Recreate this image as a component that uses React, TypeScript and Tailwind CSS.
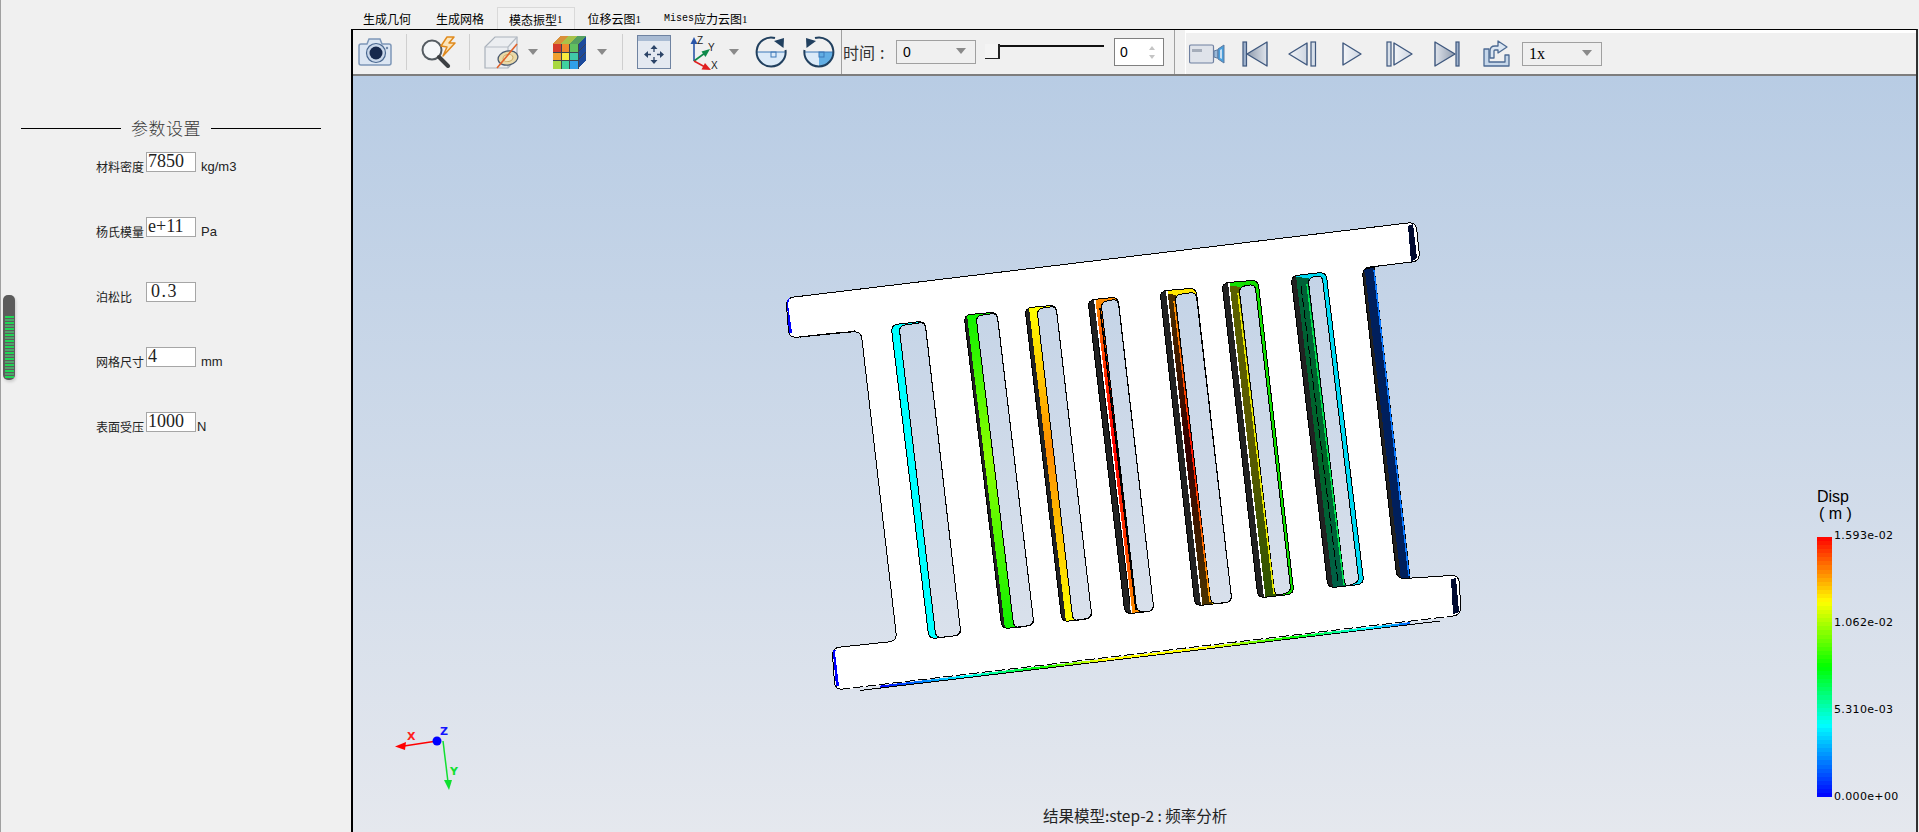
type P = [number, number];

const cjk = '"Noto Sans CJK SC", "Liberation Sans", sans-serif';

// rounded closed polygon for the model outlines
const rp = (pts: P[], r = 7) => {
  const n = pts.length;
  let d = '';
  pts.forEach((v, i) => {
    const a = pts[(i + n - 1) % n];
    const b = pts[(i + 1) % n];
    const la = Math.hypot(a[0] - v[0], a[1] - v[1]);
    const lb = Math.hypot(b[0] - v[0], b[1] - v[1]);
    const ra = Math.min(r, la / 2);
    const rb = Math.min(r, lb / 2);
    const p1 = [v[0] + ((a[0] - v[0]) / la) * ra, v[1] + ((a[1] - v[1]) / la) * ra];
    const p2 = [v[0] + ((b[0] - v[0]) / lb) * rb, v[1] + ((b[1] - v[1]) / lb) * rb];
    d += `${i === 0 ? 'M' : 'L'}${p1[0]} ${p1[1]} Q${v[0]} ${v[1]} ${p2[0]} ${p2[1]} `;
  });
  return d + 'Z';
};

const poly = (pts: P[]) => pts.map((p) => p.join(',')).join(' ');

type Slot = {
  o: P[];
  i: P[];
  band: number;
  gap?: boolean;
  wall: string;
  rim: string;
  edge?: string;
};

const slots: Slot[] = [
  { o: [[891, 325], [925, 321], [961, 635], [929, 639]], i: [[899, 326], [925, 322], [961, 635], [936, 638]], band: 0, wall: '#00ffff', rim: '#00ffff' },
  { o: [[964, 315], [997, 312], [1034, 625], [1002, 629]], i: [[976, 316], [997, 313], [1034, 625], [1014, 628]], band: 3, wall: 'url(#s2)', rim: 'url(#s2)' },
  { o: [[1025, 308], [1056, 305], [1092, 618], [1062, 622]], i: [[1037, 309], [1056, 306], [1092, 618], [1073, 621]], band: 4, wall: 'url(#s3)', rim: 'url(#s3)' },
  { o: [[1088, 300], [1118, 297], [1154, 611], [1125, 614]], i: [[1101, 302], [1118, 299], [1154, 611], [1137, 612]], band: 6, gap: true, wall: 'url(#s4)', rim: '#ff8c00', edge: '#000000' },
  { o: [[1160, 291], [1196, 288], [1232, 602], [1195, 606]], i: [[1175, 295], [1196, 292], [1232, 602], [1211, 604]], band: 6, gap: true, wall: 'url(#s5)', rim: '#ffe600', edge: 'url(#s5e)' },
  { o: [[1222, 283], [1258, 280], [1294, 594], [1258, 598]], i: [[1239, 287], [1255, 284], [1291, 592], [1275, 596]], band: 6, gap: true, wall: 'url(#s6)', rim: '#12e000', edge: '#e8e800' },
  { o: [[1291, 276], [1326, 272], [1364, 584], [1328, 588]], i: [[1308, 278], [1322, 275], [1359, 582], [1345, 587]], band: 5, wall: 'url(#s7)', rim: '#00d8f0', edge: '#00e050' },
];

const plate: P[] = [
  [786, 298], [1416, 222], [1420, 261], [1362, 268], [1397, 579], [1459, 575],
  [1461, 615], [835, 690], [832, 648], [897, 641], [861, 331], [789, 338],
];

const Slots = () => (
  <>
    {slots.map((s, n) => {
      const [a, , , d] = s.o;
      const off = s.band + (s.gap ? 1.5 : 0);
      return (
        <g key={n}>
          <clipPath id={`slot${n}`}>
            <path d={rp(s.o)} />
          </clipPath>
          <path d={rp(s.o)} fill={s.rim} />
          <g clipPath={`url(#slot${n})`}>
            <polygon points={poly([[a[0] - 9, a[1]], [s.i[0][0] + 1, s.i[0][1]], [s.i[3][0] + 1, s.i[3][1]], [d[0] - 9, d[1]]])} fill={s.wall} />
            {s.gap && <polygon points={poly([[a[0] - 9, a[1]], [a[0] + off, a[1]], [d[0] + off, d[1]], [d[0] - 9, d[1]]])} fill="#ffffff" />}
            {s.band > 0 && <polygon points={poly([[a[0] - 9, a[1]], [a[0] + s.band, a[1]], [d[0] + s.band, d[1]], [d[0] - 9, d[1]]])} fill="#222222" />}
            {n === 3 && <line x1={a[0] + 10} y1={a[1] + 40} x2={d[0] + 5} y2={d[1] - 10} stroke="#000000" strokeWidth="1" />}
            {n === 6 && <line x1={a[0] + 10} y1={a[1] + 10} x2={d[0] + 10} y2={d[1] - 6} stroke="#000000" strokeWidth="1" strokeDasharray="9 3" />}
          </g>
          <path d={rp(s.i, 6)} fill="url(#bgFill)" stroke="#000000" />
          {s.edge && <line x1={s.i[0][0] - 1} y1={s.i[0][1] + 6} x2={s.i[3][0] - 1} y2={s.i[3][1] - 2} stroke={s.edge} strokeWidth="1.5" />}
          <path d={rp(s.o)} fill="none" stroke="#000000" />
        </g>
      );
    })}
  </>
);

const Model = () => (
  <svg
    className="absolute inset-0"
    width="1563"
    height="756"
    viewBox="353 76 1563 756"
    shapeRendering="crispEdges"
  >
    <defs>
      <linearGradient id="bgFill" gradientUnits="userSpaceOnUse" x1="0" y1="76" x2="0" y2="832">
        <stop offset="0" stopColor="#b8cce4" />
        <stop offset="1" stopColor="#e5e8ee" />
      </linearGradient>
      <linearGradient id="s2" gradientUnits="userSpaceOnUse" x1="0" y1="315" x2="0" y2="629">
        <stop offset="0" stopColor="#10f000" />
        <stop offset="0.45" stopColor="#8cff00" />
        <stop offset="1" stopColor="#10f000" />
      </linearGradient>
      <linearGradient id="s3" gradientUnits="userSpaceOnUse" x1="0" y1="308" x2="0" y2="622">
        <stop offset="0" stopColor="#ffff00" />
        <stop offset="0.45" stopColor="#ff8c00" />
        <stop offset="1" stopColor="#ffff00" />
      </linearGradient>
      <linearGradient id="s4" gradientUnits="userSpaceOnUse" x1="0" y1="300" x2="0" y2="614">
        <stop offset="0" stopColor="#ff8c00" />
        <stop offset="0.2" stopColor="#ff3300" />
        <stop offset="0.45" stopColor="#ff0000" />
        <stop offset="0.75" stopColor="#ff3300" />
        <stop offset="1" stopColor="#ff9000" />
      </linearGradient>
      <linearGradient id="s5" gradientUnits="userSpaceOnUse" x1="0" y1="291" x2="0" y2="606">
        <stop offset="0" stopColor="#4a3000" />
        <stop offset="0.5" stopColor="#380000" />
        <stop offset="1" stopColor="#4a3400" />
      </linearGradient>
      <linearGradient id="s5e" gradientUnits="userSpaceOnUse" x1="0" y1="291" x2="0" y2="606">
        <stop offset="0" stopColor="#ffa000" />
        <stop offset="0.5" stopColor="#ff1000" />
        <stop offset="1" stopColor="#ffa800" />
      </linearGradient>
      <linearGradient id="s6" gradientUnits="userSpaceOnUse" x1="0" y1="283" x2="0" y2="598">
        <stop offset="0" stopColor="#5a6000" />
        <stop offset="0.5" stopColor="#5c5a00" />
        <stop offset="1" stopColor="#2e5500" />
      </linearGradient>
      <linearGradient id="s7" gradientUnits="userSpaceOnUse" x1="0" y1="276" x2="0" y2="588">
        <stop offset="0" stopColor="#006038" />
        <stop offset="0.6" stopColor="#006428" />
        <stop offset="1" stopColor="#006048" />
      </linearGradient>
      <linearGradient id="rimBottom" gradientUnits="userSpaceOnUse" x1="880" y1="0" x2="1410" y2="0">
        <stop offset="0" stopColor="#0000ff" />
        <stop offset="0.16" stopColor="#00ffff" />
        <stop offset="0.3" stopColor="#00ff00" />
        <stop offset="0.42" stopColor="#ffff00" />
        <stop offset="0.62" stopColor="#ffff00" />
        <stop offset="0.78" stopColor="#00ff00" />
        <stop offset="0.92" stopColor="#00ffff" />
        <stop offset="1" stopColor="#0060ff" />
      </linearGradient>
    </defs>

    {/* side wall under the bottom edge */}
    <line x1="860" y1="690.5" x2="1440" y2="621" stroke="#000000" />
    <line x1="880" y1="686.6" x2="1410" y2="623.2" stroke="url(#rimBottom)" strokeWidth="2" />

    {/* right side wall */}
    <polygon points="1362,270 1374,267 1410,577 1408,581 1400,583 1396,575" fill="#001f5c" stroke="#000000" />
    <polygon points="1361,272 1365,272 1401,580 1397,577" fill="#222222" />
    <line x1="1374" y1="270" x2="1409" y2="576" stroke="#0a78ff" strokeWidth="1.5" />

    <path d={rp(plate, 8)} fill="#ffffff" stroke="#000000" />
    <line x1="850" y1="688.2" x2="1450" y2="616.4" stroke="#ffffff" strokeWidth="1.2" strokeDasharray="3 10" />
    <line x1="800" y1="337" x2="855" y2="331" stroke="#000000" strokeWidth="1.2" strokeDasharray="9 3" />

    <Slots />

    {/* tab ends */}
    <polygon points="1408,226 1413,224 1417,258 1411,262" fill="#000a30" />
    <polygon points="1451,579 1456,578 1459,612 1453,614" fill="#000a30" />
    <path d="M787 304 Q786 299 790 298 L788 304 L792 333 L789 333 Z" fill="#0000ff" />
    <path d="M833 653 Q832 649 836 650 L835 653 L839 686 L836 686 Z" fill="#0000ff" />

    {/* axis triad */}
    <g shapeRendering="auto">
      <line x1="437" y1="741" x2="404" y2="746" stroke="#ff0000" strokeWidth="1.5" />
      <path d="M395 746.5 L406 742 L405 750 Z" fill="#ff0000" />
      <line x1="443" y1="741" x2="448" y2="782" stroke="#10e030" strokeWidth="1.5" />
      <path d="M449 790 L444 780 L452 780 Z" fill="#10e030" />
      <circle cx="437" cy="741" r="4.5" fill="#0000ff" />
      <text x="440" y="735" fontSize="11" fontWeight="700" fill="#1414ff" fontFamily="'DejaVu Sans', sans-serif">Z</text>
      <text x="407" y="740" fontSize="11" fontWeight="700" fill="#ff2020" fontFamily="'DejaVu Sans', sans-serif">X</text>
      <text x="450" y="775" fontSize="11" fontWeight="700" fill="#10e030" fontFamily="'DejaVu Sans', sans-serif">Y</text>
    </g>
  </svg>
);

const legendColor = (t: number) => {
  const stops: [number, number[]][] = [
    [0, [0, 0, 255]],
    [0.277, [0, 255, 255]],
    [0.5, [0, 255, 0]],
    [0.75, [255, 255, 0]],
    [1, [255, 0, 0]],
  ];
  for (let i = 1; i < stops.length; i++) {
    if (t <= stops[i][0]) {
      const k = (t - stops[i - 1][0]) / (stops[i][0] - stops[i - 1][0]);
      const c = stops[i - 1][1].map((v, j) => Math.round(v + (stops[i][1][j] - v) * k));
      return `rgb(${c.join(',')})`;
    }
  }
  return 'rgb(255,0,0)';
};

const Legend = () => (
  <div className="absolute left-[1464px] top-[412px] w-[90px]">
    <div className="text-[16px] leading-[17px] text-black" style={{ fontFamily: '"Liberation Sans", sans-serif' }}>Disp</div>
    <div className="text-[16px] leading-[17px] text-black pl-[2px] whitespace-nowrap" style={{ fontFamily: '"Liberation Sans", sans-serif' }}>( m )</div>
    <div className="flex">
      <svg width="15" height="260" className="shrink-0 mt-[15px]" shapeRendering="crispEdges">
        {Array.from({ length: 64 }).map((_, i) => (
          <rect key={i} x="0" y={(i * 260) / 64} width="15" height="5" fill={legendColor(1 - (i + 0.5) / 64)} />
        ))}
      </svg>
      <div className="ml-[2px] flex flex-col text-[11px] leading-[13px] tracking-[0.35px] text-black" style={{ fontFamily: '"DejaVu Sans", sans-serif' }}>
        <span className="mt-[7px]">1.593e-02</span>
        <span className="mt-[74px]">1.062e-02</span>
        <span className="mt-[74px]">5.310e-03</span>
        <span className="mt-[74px]">0.000e+00</span>
      </div>
    </div>
  </div>
);

// ---- toolbar icons ----
type IconProps = { className?: string };

const Arrow = ({ className }: IconProps) => (
  <svg width="10" height="6" viewBox="0 0 10 6" className={className}>
    <path d="M0 0 H10 L5 6 Z" fill="#8a8a8a" />
  </svg>
);

const Camera = ({ className }: IconProps) => (
  <svg width="34" height="28" viewBox="0 0 34 28" className={className}>
    <path d="M1 8 Q1 6 3 6 H9 L11 1 H22 L24 6 H31 Q33 6 33 8 V25 Q33 27 31 27 H3 Q1 27 1 25 Z" fill="#dce6f3" stroke="#7d97b8" strokeWidth="1.5" />
    <circle cx="18" cy="15" r="9.5" fill="#c9d7ea" stroke="#4a6890" strokeWidth="1.2" />
    <circle cx="18" cy="15" r="6.5" fill="#17294d" />
    <circle cx="29" cy="10" r="1.2" fill="#6d87a8" />
  </svg>
);

const Search = ({ className }: IconProps) => (
  <svg width="36" height="32" viewBox="0 0 36 32" className={className}>
    <circle cx="12" cy="14" r="9.5" fill="#f4f6f8" stroke="#555c62" strokeWidth="2" />
    <path d="M19 21 L28 30" stroke="#3c3f42" strokeWidth="4" strokeLinecap="round" />
    <path d="M27 1 L21 10 L27 11 L23 20 L35 7 L29 7 L34 1 Z" fill="#fbe5bb" stroke="#e08a1e" strokeWidth="1.5" strokeLinejoin="round" />
  </svg>
);

const ClipCube = ({ className }: IconProps) => (
  <svg width="35" height="33" viewBox="0 0 35 33" className={className}>
    <path d="M1 11 L11 1 H33 V22 L24 32 H1 Z" fill="#eceef1" stroke="#a9b1bb" strokeWidth="1.2" />
    <path d="M1 11 H24 V32 M24 11 L33 1" fill="none" stroke="#b5bcc5" strokeWidth="1.2" />
    <ellipse cx="24" cy="22" rx="10" ry="7" fill="#e9d9a8" stroke="#4a5a70" strokeWidth="1.3" transform="rotate(-12 24 22)" />
    <ellipse cx="24" cy="22" rx="5" ry="3.5" fill="#f3e7c2" stroke="#c9a860" strokeWidth="1" transform="rotate(-12 24 22)" />
    <path d="M13 32 L33 8" stroke="#e0622a" strokeWidth="1.6" />
  </svg>
);

const RainbowCube = ({ className }: IconProps) => (
  <svg width="33" height="33" viewBox="0 0 33 33" shapeRendering="crispEdges" className={className}>
    <path d="M0 8 L7 0 H33 L25 8 Z" fill="#55a060" />
    <path d="M7 0 H15 L8 8 H0 Z" fill="#d9903a" />
    <path d="M15 0 H24 L17 8 H8 Z" fill="#a8c24a" />
    <path d="M25 8 L33 0 V24 L25 33 Z" fill="#1c4a9c" />
    <rect x="0" y="8" width="8" height="8" fill="#d53a2a" />
    <rect x="8" y="8" width="8" height="8" fill="#ef8a2e" />
    <rect x="16" y="8" width="9" height="8" fill="#60c060" />
    <rect x="0" y="16" width="8" height="8" fill="#f0a030" />
    <rect x="8" y="16" width="8" height="8" fill="#f8ec40" />
    <rect x="16" y="16" width="9" height="8" fill="#40c8a8" />
    <rect x="0" y="24" width="8" height="9" fill="#a8d840" />
    <rect x="8" y="24" width="8" height="9" fill="#40d0a0" />
    <rect x="16" y="24" width="9" height="9" fill="#30a0e8" />
    <path d="M8 8 V33 M16 8 V33 M0 16 H25 M0 24 H25 M25 8 V33 M25 16 L33 8 M25 24 L33 16" stroke="#3c4450" strokeWidth="1" fill="none" />
  </svg>
);

const FitView = ({ className }: IconProps) => (
  <svg width="34" height="34" viewBox="0 0 34 34" className={className}>
    <rect x="0.5" y="0.5" width="33" height="33" fill="#e4e9f1" stroke="#6f83a1" />
    <rect x="1" y="1" width="32" height="5" fill="#a9bbd3" />
    <path d="M17 10 L13.5 14 H20.5 Z M17 29 L13.5 25 H20.5 Z M7 19.5 L11 16 V23 Z M27 19.5 L23 16 V23 Z" fill="#2c4468" />
    <path d="M17 13 V17 M17 22 V26 M10 19.5 H14 M20 19.5 H24" stroke="#2c4468" strokeWidth="1.3" />
  </svg>
);

const AxesIcon = ({ className }: IconProps) => (
  <svg width="32" height="36" viewBox="0 0 32 36" className={className}>
    <path d="M4 27 V8" stroke="#2a55a8" strokeWidth="1.6" />
    <path d="M4 3 L0.5 10 H7.5 Z" fill="#2a55a8" />
    <path d="M4 27 L15 19" stroke="#0e8a4a" strokeWidth="1.6" />
    <path d="M20 15 L11.5 17.5 L15.5 23 Z" fill="#0e8a4a" />
    <path d="M4 27 L15 33" stroke="#e02020" strokeWidth="1.6" />
    <path d="M21 36 L11.5 35.5 L15 29 Z" fill="#e02020" />
    <text x="7" y="10" fontSize="10" fill="#222" fontFamily="'Liberation Sans', sans-serif">Z</text>
    <text x="18" y="17" fontSize="10" fill="#222" fontFamily="'Liberation Sans', sans-serif">Y</text>
    <text x="21" y="35" fontSize="10" fill="#222" fontFamily="'Liberation Sans', sans-serif">X</text>
  </svg>
);

// second button is the mirrored one, its quarter is filled stronger
const RotateIcon = ({ className, flip }: IconProps & { flip?: boolean }) => (
  <svg width="32" height="32" viewBox="0 0 32 32" className={className} style={flip ? { transform: 'scaleX(-1)' } : undefined}>
    <path d="M1.5 16 A14.5 14.5 0 0 0 30.5 16 Z" fill="#dbeaf8" />
    {flip && <path d="M16 16 H1.5 A14.5 14.5 0 0 0 16 30.5 Z" fill="#62aee4" />}
    <rect x={flip ? 11 : 16} y="16" width="5" height="5" fill="none" stroke="#3d78b8" />
    <path d="M1.5 16 H30.5" stroke="#3d78b8" strokeWidth="1" />
    <path d="M30.5 14 A14.5 14.5 0 1 1 20 2" fill="none" stroke="#21405f" strokeWidth="2" />
    <path d="M19 5 L29 2 L28.5 12 Z" fill="#21405f" />
  </svg>
);

const VideoCam = ({ className }: IconProps) => (
  <svg width="36" height="20" viewBox="0 0 36 20" className={className}>
    <rect x="0.5" y="1" width="24" height="18" rx="1.5" fill="#dfe3ea" stroke="#6f80a0" strokeWidth="1.2" />
    <rect x="3" y="5" width="10" height="3" fill="#a5adba" />
    <path d="M25 7 L28 6 H29 V14 H28 L25 13 Z" fill="#9ab8d8" stroke="#5c7aa0" />
    <path d="M29 5 L35 1 V19 L29 15 Z" fill="#4a9fdc" stroke="#5c7aa0" />
    <path d="M31 6 L33 5 V15 L31 14 Z" fill="#c6def2" />
  </svg>
);

const tri = { fill: 'url(#play)', stroke: '#3f587e', strokeWidth: 1.4, strokeLinejoin: 'round' as const };

const PlayDefs = () => (
  <svg width="0" height="0" className="absolute">
    <defs>
      <linearGradient id="play" x1="0" y1="0" x2="1" y2="0">
        <stop offset="0" stopColor="#f4f6f9" />
        <stop offset="1" stopColor="#cdd5e1" />
      </linearGradient>
      <linearGradient id="playDark" x1="0" y1="0" x2="1" y2="0">
        <stop offset="0" stopColor="#dfe4ec" />
        <stop offset="1" stopColor="#8f9bad" />
      </linearGradient>
      <linearGradient id="playDarkR" x1="1" y1="0" x2="0" y2="0">
        <stop offset="0" stopColor="#dfe4ec" />
        <stop offset="1" stopColor="#8f9bad" />
      </linearGradient>
    </defs>
  </svg>
);

const First = ({ className }: IconProps) => (
  <svg width="26" height="26" viewBox="0 0 26 26" className={className}>
    <rect x="1" y="1" width="3.5" height="24" fill="#9fb2cc" stroke="#3f587e" strokeWidth="1.2" />
    <path d="M25 1 V25 L5 13 Z" fill="url(#playDarkR)" stroke="#3f587e" strokeWidth="1.4" strokeLinejoin="round" />
  </svg>
);

const Prev = ({ className }: IconProps) => (
  <svg width="29" height="26" viewBox="0 0 29 26" className={className}>
    <path d="M1 13 L19 2 V24 Z" {...tri} />
    <rect x="23" y="1" width="4.5" height="24" fill="#d7dfe9" stroke="#3f587e" strokeWidth="1.2" />
  </svg>
);

const Play = ({ className }: IconProps) => (
  <svg width="20" height="26" viewBox="0 0 20 26" className={className}>
    <path d="M1 2 L19 13 L1 24 Z" {...tri} />
  </svg>
);

const Next = ({ className }: IconProps) => (
  <svg width="27" height="26" viewBox="0 0 27 26" className={className}>
    <rect x="1" y="1" width="4" height="24" fill="#d7dfe9" stroke="#3f587e" strokeWidth="1.2" />
    <path d="M8 2 L26 13 L8 24 Z" {...tri} />
  </svg>
);

const Last = ({ className }: IconProps) => (
  <svg width="26" height="26" viewBox="0 0 26 26" className={className}>
    <path d="M1 1 V25 L21 13 Z" fill="url(#playDark)" stroke="#3f587e" strokeWidth="1.4" strokeLinejoin="round" />
    <rect x="22" y="1" width="3" height="24" fill="#9fb2cc" stroke="#3f587e" strokeWidth="1.2" />
  </svg>
);

const Export = ({ className }: IconProps) => (
  <svg width="28" height="28" viewBox="0 0 28 28" className={className}>
    <path d="M2 9 H7 V22 H23 V15 H27 V26 H2 Z" fill="#c6d7ea" stroke="#4c6a92" strokeWidth="1.3" strokeLinejoin="round" />
    <path d="M8 18 V11 Q8 6 13 6 H16 V1 L25 7 L16 13 V10 H13 Q12 10 12 11 V18 Z" fill="#dbe6f2" stroke="#4c6a92" strokeWidth="1.3" strokeLinejoin="round" />
  </svg>
);

const Combo = ({ value, w, serif }: { value: string; w: string; serif?: boolean }) => (
  <div className={`${w} h-[24px] flex items-center justify-between border border-[#a0a0a0] bg-[#f0f0f0] pl-[6px] pr-[9px] shrink-0`}>
    <span className={serif ? 'text-[16px] text-black' : 'text-[14px] text-black'} style={{ fontFamily: serif ? '"Liberation Serif", serif' : '"Liberation Sans", sans-serif' }}>
      {value}
    </span>
    <Arrow className="-mt-[2px]" />
  </div>
);

const Sep = ({ className }: IconProps) => <div className={`w-px h-[36px] bg-[#cfcfcf] shrink-0 ${className ?? ''}`} />;

const Toolbar = () => (
  <div className="relative flex h-[46px] items-center border-b-2 border-[#7d7d7d] bg-[#f0f0f0]">
    <Camera className="ml-[5px] shrink-0" />
    <Sep className="ml-[14px]" />
    <Search className="ml-[13px] shrink-0" />
    <Sep className="ml-[13px]" />
    <ClipCube className="ml-[14px] shrink-0" />
    <Arrow className="ml-[9px] shrink-0" />
    <RainbowCube className="ml-[15px] shrink-0" />
    <Arrow className="ml-[11px] shrink-0" />
    <Sep className="ml-[15px]" />
    <FitView className="ml-[14px] shrink-0" />
    <AxesIcon className="ml-[19px] shrink-0" />
    <Arrow className="ml-[7px] shrink-0" />
    <RotateIcon className="ml-[16px] shrink-0" />
    <RotateIcon className="ml-[16px] shrink-0" flip />
    <div className="ml-[6px] w-px self-stretch bg-[#a0a0a0] shrink-0" />

    <span className="ml-px w-[42px] shrink-0 whitespace-nowrap text-[16px] text-[#333]" style={{ fontFamily: cjk }}>
      时间<span className="ml-[5px]">:</span>
    </span>
    <div className="ml-[11px]"><Combo value="0" w="w-[80px]" /></div>
    <div className="ml-[9px] relative w-[119px] h-[16px] shrink-0">
      <div className="absolute left-[15px] right-0 top-[1px] h-[2px] bg-[#111]" />
      <div className="absolute left-0 top-0 w-[15px] h-[15px] bg-[#f4f4f4] border-r-2 border-b border-[#222]" />
    </div>
    <div className="ml-[10px] w-[50px] h-[28px] shrink-0 flex items-center justify-between border border-[#808080] bg-white pl-[5px] pr-[8px]">
      <span className="text-[14px] text-black" style={{ fontFamily: '"Liberation Sans", sans-serif' }}>0</span>
      <div className="flex flex-col gap-[5px]">
        <div className="w-0 h-0 border-x-[3px] border-x-transparent border-b-[4px] border-b-[#c4c4c4]" />
        <div className="w-0 h-0 border-x-[3px] border-x-transparent border-t-[4px] border-t-[#c4c4c4]" />
      </div>
    </div>
    <div className="ml-[10px] w-px self-stretch bg-[#a0a0a0] shrink-0" />

    <div className="ml-[10px] flex flex-1 self-stretch items-center border-t-[3px] border-l-[1px] border-white">
      <VideoCam className="ml-[3px] shrink-0" />
      <First className="ml-[17px] shrink-0" />
      <Prev className="ml-[20px] shrink-0" />
      <Play className="ml-[25px] shrink-0" />
      <Next className="ml-[24px] shrink-0" />
      <Last className="ml-[21px] shrink-0" />
      <Export className="ml-[22px] shrink-0" />
      <div className="ml-[12px]"><Combo value="1x" w="w-[80px]" serif /></div>
    </div>
  </div>
);

const mono = { fontFamily: '"Liberation Mono", monospace' };
const digit = { fontFamily: '"Liberation Serif", serif' };

const Tabs = () => (
  <div className="flex h-[29px] items-end text-[12px] leading-none text-black" style={{ fontFamily: cjk }}>
    <div className="px-[12px] h-[22px] pt-[2px] flex items-center">生成几何</div>
    <div className="pl-[13px] pr-[12px] h-[22px] pt-[2px] flex items-center">生成网格</div>
    <div className="ml-px px-[11px] h-[22px] pt-[2px] flex items-center border border-b-0 border-[#d9d9d9] bg-[#f2f2f2]">
      模态振型<span className="text-[11px]" style={digit}>1</span>
    </div>
    <div className="pl-[13px] pr-[12px] h-[22px] pt-[2px] flex items-center">
      位移云图<span className="text-[11px]" style={digit}>1</span>
    </div>
    <div className="pl-[11px] h-[22px] pt-[2px] flex items-center">
      <span className="text-[10px]" style={mono}>Mises</span>应力云图<span className="text-[11px]" style={digit}>1</span>
    </div>
  </div>
);

const params = [
  { label: '材料密度', value: '7850', unit: 'kg/m3' },
  { label: '杨氏模量', value: 'e+11', unit: 'Pa' },
  { label: '泊松比', value: '0.3', unit: '', pad: true },
  { label: '网格尺寸', value: '4', unit: 'mm' },
  { label: '表面受压', value: '1000', unit: 'N', tight: true },
];

const Sidebar = () => (
  <div className="w-[351px] shrink-0 border-l border-[#a0a0a0] relative">
    <div className="flex items-center pl-[20px] pt-[116px] h-[140px]">
      <div className="w-[100px] h-px bg-black" />
      <span className="ml-[10px] w-[70px] whitespace-nowrap text-[17px] leading-[24px] tracking-[0.5px] text-[#3a3a3a]" style={{ fontFamily: cjk, fontWeight: 300 }}>参数设置</span>
      <div className="ml-[10px] w-[110px] h-px bg-black" />
    </div>
    <div className="flex flex-col gap-[45px] mt-[12px] pl-[95px]">
      {params.map((p) => (
        <div key={p.label} className="flex items-start h-[20px]">
          <span className="w-[50px] pt-[7px] text-[12px] leading-[16px] text-[#222]" style={{ fontFamily: cjk }}>{p.label}</span>
          <div className={`w-[50px] h-[20px] border border-[#a6a6a6] bg-white text-[18px] leading-[17px] text-[#222] ${p.pad ? 'pl-[4px] tracking-[1.5px]' : 'pl-px'}`} style={{ fontFamily: '"Liberation Serif", serif' }}>
            {p.value}
          </div>
          <span className={`${p.tight ? 'ml-px' : 'ml-[5px]'} pt-[7px] text-[13px] leading-[16px] text-[#222]`} style={{ fontFamily: '"Liberation Sans", sans-serif' }}>{p.unit}</span>
        </div>
      ))}
    </div>

    {/* collapse handle */}
    <div className="absolute left-[2px] top-[295px] flex h-[85px] w-[12px] flex-col items-center gap-[1px] rounded-[5px] bg-[#5c5c5c] pt-[21px] shadow-[1px_2px_3px_rgba(0,0,0,0.15)]">
      {Array.from({ length: 21 }).map((_, i) => (
        <div key={i} className={`h-[2px] w-[9px] shrink-0 ${i % 2 === 0 ? 'bg-[#1fd655]' : 'bg-[#4fa36a]'}`} />
      ))}
    </div>
  </div>
);

export default function App() {
  return (
    <div className="flex h-[832px] w-[1919px] overflow-hidden bg-[#f0f0f0]">
      <PlayDefs />
      <Sidebar />
      <div className="flex flex-1 flex-col pr-px">
        <Tabs />
        <div className="flex flex-1 flex-col border-t border-l-2 border-r-2 border-t-black border-l-black border-r-[#303030]">
          <Toolbar />
          <div className="relative flex-1 bg-gradient-to-b from-[#b8cce4] to-[#e5e8ee]">
            <Model />
            <Legend />
            <div className="absolute bottom-[8px] left-[690px] whitespace-nowrap text-[15.5px] leading-[18px] text-[#222]" style={{ fontFamily: cjk }}>
              结果模型:step-2 : 频率分析
            </div>
          </div>
        </div>
      </div>
    </div>
  );
}
